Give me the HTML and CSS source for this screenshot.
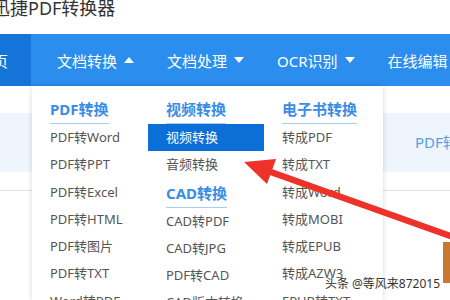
FILE: index.html
```html
<!DOCTYPE html>
<html lang="zh-CN">
<head>
  <meta charset="UTF-8">
  <title>迅捷PDF转换器</title>
  <meta name="viewport" content="width=device-width, initial-scale=1">
  <link rel="stylesheet" href="styles.css">
</head>
<body>
<div class="title">迅捷PDF转换器</div>

<nav class="nav">
  <div class="nav-home">首页</div>
  <div class="nav-links">
    <div class="nav-item">文档转换 <span class="caret up"></span></div>
    <div class="nav-item">文档处理 <span class="caret"></span></div>
    <div class="nav-item">OCR识别 <span class="caret"></span></div>
    <div class="nav-item">在线编辑</div>
  </div>
</nav>

<div class="band">PDF转Word</div>
<div class="rule"></div>
<div class="orange"></div>

<div class="menu">
  <div class="col">
    <div class="head-wrap"><span class="head">PDF转换</span></div>
    <div class="item">PDF转Word</div>
    <div class="item">PDF转PPT</div>
    <div class="item">PDF转Excel</div>
    <div class="item">PDF转HTML</div>
    <div class="item">PDF转图片</div>
    <div class="item">PDF转TXT</div>
    <div class="item">Word转PDF</div>
  </div>
  <div class="col">
    <div class="head-wrap"><span class="head">视频转换</span></div>
    <div class="item active">视频转换</div>
    <div class="item">音频转换</div>
    <div class="head-wrap second"><span class="head">CAD转换</span></div>
    <div class="item">CAD转PDF</div>
    <div class="item">CAD转JPG</div>
    <div class="item">PDF转CAD</div>
    <div class="item">CAD版本转换</div>
  </div>
  <div class="col">
    <div class="head-wrap"><span class="head">电子书转换</span></div>
    <div class="item">转成PDF</div>
    <div class="item">转成TXT</div>
    <div class="item">转成Word</div>
    <div class="item">转成MOBI</div>
    <div class="item">转成EPUB</div>
    <div class="item">转成AZW3</div>
    <div class="item">EPUB转TXT</div>
  </div>
</div>

<!-- annotation arrow drawn over the screenshot -->
<svg class="arrow" width="450" height="300" viewBox="0 0 450 300">
  <line x1="268" y1="171" x2="456" y2="238" stroke="#ee3129" stroke-width="6.5"/>
  <polygon points="244,162 276,159 267,184" fill="#ee3129"/>
</svg>

<div class="watermark">头条 @等风来872015</div>
</body>
</html>
```

FILE: styles.css
```css
body {
  margin: 0;
  width: 450px;
  height: 300px;
  overflow: hidden;
  position: relative;
  background: #fff;
  font-family: "Noto Sans", "Noto Sans CJK SC", sans-serif;
}
.title {
  height: 34px;
  margin-left: -8px;
  font-size: 18px;
  line-height: 16px;
  color: #333;
  white-space: nowrap;
}
.nav {
  display: flex;
  align-items: center;
  height: 52px;
  background: #2b8ded;
  color: #fff;
  font-size: 15px;
}
.nav-home {
  box-sizing: border-box;
  width: 31px;
  height: 100%;
  padding-right: 23px;
  background: #1574d8;
  display: flex;
  align-items: center;
  justify-content: flex-end;
  white-space: nowrap;
}
.nav-links {
  display: flex;
  gap: 33px;
  margin-left: 26px;
}
.nav-item {
  display: flex;
  align-items: center;
  gap: 7px;
  white-space: nowrap;
}
.caret {
  width: 0;
  height: 0;
  border-left: 5.5px solid transparent;
  border-right: 5.5px solid transparent;
  border-top: 6px solid #fff;
}
.caret.up {
  border-top: 0;
  border-bottom: 6px solid #fff;
}
.band {
  margin-top: 27px;
  height: 59px;
  background: #eef5fc;
  color: #5b9de2;
  font-size: 15px;
  line-height: 59px;
  padding-left: 415px;
  white-space: nowrap;
  overflow: hidden;
}
.rule {
  margin-top: 18px;
  border-top: 1px solid #e2e2e2;
}
.orange {
  margin-top: 51px;
  margin-left: 443px;
  width: 7px;
  height: 41px;
  background: #c9782f;
}
.menu {
  position: absolute;
  left: 32px;
  top: 86px;
  width: 351px;
  height: 204px;
  padding-top: 10px;
  display: flex;
  overflow: hidden;
  background: #fff;
  box-shadow: 0 0 5px rgba(0,0,0,0.16);
}
.menu::before {
  content: "";
  position: absolute;
  left: 46px;
  top: -8px;
  border-left: 8px solid transparent;
  border-right: 8px solid transparent;
  border-bottom: 8px solid #fff;
}
.pointer {
  position: absolute;
}
.col {
  width: 116px;
}
.head-wrap {
  padding-left: 18px;
}
.head-wrap.second {
  margin-top: 1px;
}
.head {
  display: inline-block;
  font-size: 15px;
  font-weight: bold;
  line-height: 27px;
  color: #3a8de6;
  border-bottom: 1px solid #a8cdf2;
}
.item {
  height: 27.3px;
  line-height: 27.3px;
  padding-left: 18px;
  font-size: 13px;
  color: #555;
  white-space: nowrap;
}
.item.active {
  background: #0b6fd7;
  color: #fff;
}
.arrow {
  position: absolute;
  left: 0;
  top: 0;
  pointer-events: none;
}
.watermark {
  position: absolute;
  right: 10px;
  top: 274px;
  font-size: 12px;
  color: #333;
  white-space: nowrap;
  text-shadow: 0 0 2px #fff, 0 0 2px #fff;
}
```
